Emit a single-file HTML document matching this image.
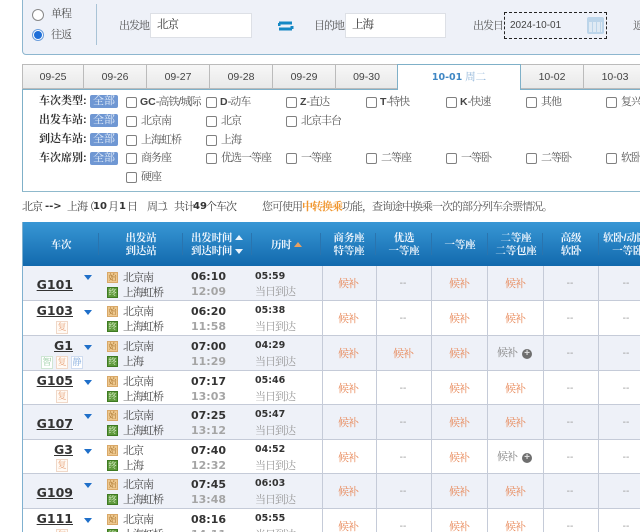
<!DOCTYPE html>
<html><head><meta charset="utf-8">
<style>
html,body{margin:0;padding:0;background:#fff;}
#p{position:relative;width:640px;height:532px;overflow:hidden;background:#fff;font-family:"Liberation Sans","Noto Serif CJK SC",serif;font-size:10px;color:#444;}
#p div{position:absolute;white-space:nowrap;}
.d{font-family:"DejaVu Sans",sans-serif;}
.lb{color:#555;font-size:11px;letter-spacing:-1px;line-height:14px;}
.inp{background:#fff;border:1px solid #dde0e6;box-sizing:border-box;height:25px;font-size:11.5px;letter-spacing:-1px;line-height:23px;padding-left:6px;color:#333;}
.tab{top:64px;height:25px;box-sizing:border-box;background:linear-gradient(#f7f7f7,#e9e9e9);border:1px solid #bbb;border-left:0;text-align:center;line-height:24px;font-size:10.5px;color:#444;}
.ft{font-weight:bold;color:#333;font-size:11px;line-height:14px;left:39px;}
.all{left:90px;width:28px;height:13px;background:#6f97d3;border-radius:2px;color:#e4edf9;font-size:11px;line-height:13px;text-align:center;}
.cb{width:9px;height:9px;border:1px solid #808080;border-radius:2px;background:#fff;}
.ct{font-size:11px;letter-spacing:-1px;line-height:14px;color:#555;}
.ct b{font-weight:bold;font-size:10.5px;letter-spacing:0;color:#444;}
.h{color:#eef5fc;font-size:10.5px;line-height:13px;text-align:center;font-weight:bold;letter-spacing:-.2px;}
.sep{top:233px;width:1px;height:22px;background:#2a74ae;}
.row{left:23px;width:617px;height:35px;box-sizing:border-box;border-bottom:1px solid #c5cbd8;}
.odd{background:#eef1f8;}.even{background:#fff;}
.g{font-family:"DejaVu Sans",sans-serif;font-weight:bold;font-size:12.5px;line-height:16px;color:#333;text-decoration:underline;text-align:right;width:50px;left:0;}
.tri{left:61px;width:0;height:0;border-left:4px solid transparent;border-right:4px solid transparent;border-top:5px solid #1f6fc9;margin-top:1px;}
.s1,.s2{left:84px;width:9px;height:9px;font-size:8px;line-height:9px;text-align:center;overflow:hidden;}
.s1{background:#eec88f;border:1px solid #d9a868;color:#a8732c;}
.s2{background:#5f9a3c;border:1px solid #3e7a22;color:#dff0d0;}
.st{left:100px;font-size:11px;letter-spacing:-1px;line-height:14px;color:#444;margin-top:1px;}
.t1,.t2{left:168px;font-family:"DejaVu Sans",sans-serif;font-weight:bold;font-size:11px;line-height:14px;color:#333;}
.t2{color:#a5a5a5;}
.du{left:232px;font-family:"DejaVu Sans",sans-serif;font-weight:bold;font-size:9.5px;line-height:14px;color:#333;}
.ar{left:232px;font-size:11px;letter-spacing:-1px;line-height:14px;color:#999;}
.c{text-align:center;font-size:11px;letter-spacing:-1px;line-height:14px;top:11px;color:#e8895a;}
.c1{left:299px;width:52px;}.c2{left:353px;width:54px;}.c3{left:409px;width:54px;}.c4{left:465px;width:54px;}.c5{left:520px;width:54px;}.c6{left:576px;width:54px;}
.n{color:#999;font-size:10px;letter-spacing:0;}
.gr{left:474px;width:auto;color:#888;top:10px;}
.vl{width:1px;background:#c5cbd8;top:266px;height:266px;}
.tag{width:10px;height:11px;border:1px solid #f0d8c8;background:#fffaf5;color:#e8a57c;font-size:9px;line-height:11px;text-align:center;}
.plus{left:499px;top:13px;width:10px;height:10px;background:#6e6e6e;border-radius:50%;color:#ddd;font-size:10px;line-height:10px;text-align:center;font-weight:bold;}
.sm{top:200px;font-size:11px;letter-spacing:-1px;line-height:14px;color:#444;}
.sb{top:200px;font-size:10px;line-height:14px;color:#333;font-weight:bold;font-family:"DejaVu Sans",sans-serif;}
</style></head><body><div id="p">

<!-- search panel -->
<div style="left:22px;top:-6px;width:630px;height:61px;box-sizing:border-box;background:#eef1f8;border:1px solid #8db6cf;border-radius:4px;"></div>
<div style="left:32px;top:9px;width:10px;height:10px;border:1px solid #888;border-radius:50%;background:#fff;"></div>
<div class="lb" style="left:51px;top:7px;">单程</div>
<div style="left:32px;top:29px;width:10px;height:10px;border:1px solid #6a9ddb;border-radius:50%;background:#fff;"></div>
<div style="left:34px;top:31px;width:8px;height:8px;border-radius:50%;background:#1f6fd8;"></div>
<div class="lb" style="left:51px;top:28px;">往返</div>
<div style="left:96px;top:4px;width:1px;height:41px;background:#a9c3d6;"></div>
<div class="lb" style="left:119px;top:19px;">出发地</div>
<div class="inp" style="left:150px;top:13px;width:102px;">北京</div>
<svg style="position:absolute;left:278px;top:19px;" width="16" height="14" viewBox="0 0 16 14"><path d="M1 4h13M1 10h13M1 4v3M14 10V7" fill="none" stroke="#1588c4" stroke-width="3"/></svg>
<div class="lb" style="left:314px;top:19px;">目的地</div>
<div class="inp" style="left:345px;top:13px;width:101px;">上海</div>
<div class="lb" style="left:473px;top:19px;">出发日</div>
<div style="left:504px;top:12px;width:103px;height:27px;box-sizing:border-box;border:1px dashed #222;background:#eef1f8;"></div>
<div style="left:510px;top:19px;font-size:10px;line-height:14px;color:#444;">2024-10-01</div>
<div style="left:587px;top:17px;width:17px;height:17px;background:#bcd5ea;border-radius:2px;"></div>
<div style="left:589px;top:22px;width:13px;height:10px;background:repeating-linear-gradient(90deg,#dfeaf4 0 3px,#bcd5ea 3px 4px);"></div>
<div class="lb" style="left:633px;top:19px;">返</div>

<!-- tabs -->
<div class="tab" style="left:22px;width:62px;border-left:1px solid #bbb;">09-25</div>
<div class="tab" style="left:84px;width:63px;">09-26</div>
<div class="tab" style="left:147px;width:63px;">09-27</div>
<div class="tab" style="left:210px;width:63px;">09-28</div>
<div class="tab" style="left:273px;width:63px;">09-29</div>
<div class="tab" style="left:336px;width:62px;">09-30</div>
<div style="left:397px;top:64px;width:124px;height:26px;box-sizing:border-box;background:#fff;border:1px solid #7fb0c8;border-bottom:0;text-align:center;line-height:24px;font-size:10.5px;color:#8fb4d8;"><span class="d" style="font-weight:bold;font-size:9.5px;color:#3f87c4;">10-01</span> 周二</div>
<div class="tab" style="left:521px;width:63px;">10-02</div>
<div class="tab" style="left:584px;width:63px;">10-03</div>

<!-- filter box -->
<div style="left:22px;top:89px;width:375px;height:1px;background:#7fb0c8;"></div>
<div style="left:521px;top:89px;width:119px;height:1px;background:#7fb0c8;"></div>
<div style="left:22px;top:89px;width:1px;height:103px;background:#7fb0c8;"></div>
<div style="left:22px;top:191px;width:618px;height:1px;background:#8fb9cc;"></div>

<div class="ft" style="top:94px;">车次类型:</div><div class="all" style="top:95px;">全部</div>
<div class="ft" style="top:113px;">出发车站:</div><div class="all" style="top:114px;">全部</div>
<div class="ft" style="top:132px;">到达车站:</div><div class="all" style="top:133px;">全部</div>
<div class="ft" style="top:151px;">车次席别:</div><div class="all" style="top:152px;">全部</div>

<div class="cb" style="left:126px;top:97px;"></div><div class="ct" style="left:140px;top:95px;"><b>GC</b>-高铁/城际</div>
<div class="cb" style="left:206px;top:97px;"></div><div class="ct" style="left:220px;top:95px;"><b>D</b>-动车</div>
<div class="cb" style="left:286px;top:97px;"></div><div class="ct" style="left:300px;top:95px;"><b>Z</b>-直达</div>
<div class="cb" style="left:366px;top:97px;"></div><div class="ct" style="left:380px;top:95px;"><b>T</b>-特快</div>
<div class="cb" style="left:446px;top:97px;"></div><div class="ct" style="left:460px;top:95px;"><b>K</b>-快速</div>
<div class="cb" style="left:526px;top:97px;"></div><div class="ct" style="left:541px;top:95px;">其他</div>
<div class="cb" style="left:606px;top:97px;"></div><div class="ct" style="left:621px;top:95px;">复兴</div>

<div class="cb" style="left:126px;top:116px;"></div><div class="ct" style="left:141px;top:114px;">北京南</div>
<div class="cb" style="left:206px;top:116px;"></div><div class="ct" style="left:221px;top:114px;">北京</div>
<div class="cb" style="left:286px;top:116px;"></div><div class="ct" style="left:301px;top:114px;">北京丰台</div>

<div class="cb" style="left:126px;top:135px;"></div><div class="ct" style="left:141px;top:133px;">上海虹桥</div>
<div class="cb" style="left:206px;top:135px;"></div><div class="ct" style="left:221px;top:133px;">上海</div>

<div class="cb" style="left:126px;top:153px;"></div><div class="ct" style="left:141px;top:151px;">商务座</div>
<div class="cb" style="left:206px;top:153px;"></div><div class="ct" style="left:221px;top:151px;">优选一等座</div>
<div class="cb" style="left:286px;top:153px;"></div><div class="ct" style="left:301px;top:151px;">一等座</div>
<div class="cb" style="left:366px;top:153px;"></div><div class="ct" style="left:381px;top:151px;">二等座</div>
<div class="cb" style="left:446px;top:153px;"></div><div class="ct" style="left:461px;top:151px;">一等卧</div>
<div class="cb" style="left:526px;top:153px;"></div><div class="ct" style="left:541px;top:151px;">二等卧</div>
<div class="cb" style="left:606px;top:153px;"></div><div class="ct" style="left:621px;top:151px;">软卧</div>
<div class="cb" style="left:126px;top:172px;"></div><div class="ct" style="left:141px;top:170px;">硬座</div>

<!-- summary -->
<div class="sm" style="left:22px;">北京</div>
<div class="sb" style="left:45px;">--&gt;</div>
<div class="sm" style="left:67px;">上海</div>
<div class="sm" style="left:84px;">（</div>
<div class="sb" style="left:93px;">10</div>
<div class="sm" style="left:108px;">月</div>
<div class="sb" style="left:119px;">1</div>
<div class="sm" style="left:127px;">日</div>
<div class="sm" style="left:147px;">周二</div>
<div class="sm" style="left:162px;">）</div>
<div class="sm" style="left:174px;">共计</div>
<div class="sb" style="left:193px;">49</div>
<div class="sm" style="left:206px;">个车次</div>
<div class="sm" style="left:262px;color:#555;">您可使用<span style="color:#f0962e;font-weight:bold;">中转换乘</span>功能，查询途中换乘一次的部分列车余票情况。</div>

<!-- header -->
<div style="left:22px;top:222px;width:618px;height:44px;background:linear-gradient(#3897d5,#1269ad);"></div>
<div class="h" style="left:40px;top:239px;width:42px;">车次</div>
<div class="h" style="left:120px;top:232px;width:42px;">出发站<br>到达站</div>
<div class="h" style="left:191px;top:232px;text-align:left;">出发时间<br>到达时间</div>
<div style="left:235px;top:235px;width:0;height:0;border-left:4px solid transparent;border-right:4px solid transparent;border-bottom:5px solid #eaf3fb;"></div>
<div style="left:235px;top:249px;width:0;height:0;border-left:4px solid transparent;border-right:4px solid transparent;border-top:5px solid #eaf3fb;"></div>
<div class="h" style="left:271px;top:239px;">历时</div>
<div style="left:294px;top:242px;width:0;height:0;border-left:4px solid transparent;border-right:4px solid transparent;border-bottom:5px solid #e8a060;"></div>
<div class="h" style="left:323px;top:232px;width:52px;">商务座<br>特等座</div>
<div class="h" style="left:378px;top:232px;width:52px;">优选<br>一等座</div>
<div class="h" style="left:434px;top:239px;width:52px;">一等座</div>
<div class="h" style="left:490px;top:232px;width:52px;">二等座<br>二等包座</div>
<div class="h" style="left:545px;top:232px;width:52px;">高级<br>软卧</div>
<div class="h" style="left:603px;top:232px;">软卧/动卧<br>&nbsp;&nbsp;一等卧</div>
<div class="sep" style="left:98px;"></div><div class="sep" style="left:182px;"></div><div class="sep" style="left:251px;"></div><div class="sep" style="left:320px;"></div><div class="sep" style="left:375px;"></div><div class="sep" style="left:431px;"></div><div class="sep" style="left:487px;"></div><div class="sep" style="left:542px;"></div><div class="sep" style="left:598px;"></div>

<!-- rows -->
<div class="row odd" style="top:266px;"><div class="g" style="top:11px;">G101</div><div class="tri" style="top:8px;"></div><div class="s1" style="top:6px;">始</div><div class="st" style="top:4px;">北京南</div><div class="s2" style="top:21px;">终</div><div class="st" style="top:19px;">上海虹桥</div><div class="t1" style="top:4px;">06:10</div><div class="t2" style="top:19px;">12:09</div><div class="du" style="top:4px;">05:59</div><div class="ar" style="top:19px;">当日到达</div><div class="c c1">候补</div><div class="c c2 n">--</div><div class="c c3">候补</div><div class="c c4">候补</div><div class="c c5 n">--</div><div class="c c6 n">--</div></div>

<div class="row even" style="top:301px;"><div class="g" style="top:2px;">G103</div><div class="tri" style="top:8px;"></div><div class="tag" style="left:33px;top:20px;">复</div><div class="s1" style="top:5px;">始</div><div class="st" style="top:3px;">北京南</div><div class="s2" style="top:20px;">终</div><div class="st" style="top:18px;">上海虹桥</div><div class="t1" style="top:4px;">06:20</div><div class="t2" style="top:19px;">11:58</div><div class="du" style="top:3px;">05:38</div><div class="ar" style="top:19px;">当日到达</div><div class="c c1">候补</div><div class="c c2 n">--</div><div class="c c3">候补</div><div class="c c4">候补</div><div class="c c5 n">--</div><div class="c c6 n">--</div></div>

<div class="row odd" style="top:336px;"><div class="g" style="top:2px;">G1</div><div class="tri" style="top:8px;"></div><div class="tag" style="left:18px;top:20px;color:#8fc89a;border-color:#cfe6d4;background:#fff;">智</div><div class="tag" style="left:33px;top:20px;">复</div><div class="tag" style="left:48px;top:20px;color:#7fa8dc;border-color:#cfdcf0;background:#fff;">静</div><div class="s1" style="top:5px;">始</div><div class="st" style="top:3px;">北京南</div><div class="s2" style="top:20px;">终</div><div class="st" style="top:18px;">上海</div><div class="t1" style="top:4px;">07:00</div><div class="t2" style="top:19px;">11:29</div><div class="du" style="top:3px;">04:29</div><div class="ar" style="top:19px;">当日到达</div><div class="c c1">候补</div><div class="c c2">候补</div><div class="c c3">候补</div><div class="c gr">候补</div><div class="plus">+</div><div class="c c5 n">--</div><div class="c c6 n">--</div></div>

<div class="row even" style="top:371px;height:34px;"><div class="g" style="top:2px;">G105</div><div class="tri" style="top:8px;"></div><div class="tag" style="left:33px;top:19px;">复</div><div class="s1" style="top:5px;">始</div><div class="st" style="top:3px;">北京南</div><div class="s2" style="top:20px;">终</div><div class="st" style="top:18px;">上海虹桥</div><div class="t1" style="top:4px;">07:17</div><div class="t2" style="top:19px;">13:03</div><div class="du" style="top:3px;">05:46</div><div class="ar" style="top:19px;">当日到达</div><div class="c c1">候补</div><div class="c c2 n">--</div><div class="c c3">候补</div><div class="c c4">候补</div><div class="c c5 n">--</div><div class="c c6 n">--</div></div>

<div class="row odd" style="top:405px;"><div class="g" style="top:11px;">G107</div><div class="tri" style="top:8px;"></div><div class="s1" style="top:5px;">始</div><div class="st" style="top:3px;">北京南</div><div class="s2" style="top:20px;">终</div><div class="st" style="top:18px;">上海虹桥</div><div class="t1" style="top:4px;">07:25</div><div class="t2" style="top:19px;">13:12</div><div class="du" style="top:3px;">05:47</div><div class="ar" style="top:19px;">当日到达</div><div class="c c1">候补</div><div class="c c2 n">--</div><div class="c c3">候补</div><div class="c c4">候补</div><div class="c c5 n">--</div><div class="c c6 n">--</div></div>

<div class="row even" style="top:440px;height:34px;"><div class="g" style="top:2px;">G3</div><div class="tri" style="top:8px;"></div><div class="tag" style="left:33px;top:19px;">复</div><div class="s1" style="top:5px;">始</div><div class="st" style="top:3px;">北京</div><div class="s2" style="top:20px;">终</div><div class="st" style="top:18px;">上海</div><div class="t1" style="top:4px;">07:40</div><div class="t2" style="top:19px;">12:32</div><div class="du" style="top:3px;">04:52</div><div class="ar" style="top:19px;">当日到达</div><div class="c c1">候补</div><div class="c c2 n">--</div><div class="c c3">候补</div><div class="c gr">候补</div><div class="plus">+</div><div class="c c5 n">--</div><div class="c c6 n">--</div></div>

<div class="row odd" style="top:474px;"><div class="g" style="top:11px;">G109</div><div class="tri" style="top:8px;"></div><div class="s1" style="top:5px;">始</div><div class="st" style="top:3px;">北京南</div><div class="s2" style="top:20px;">终</div><div class="st" style="top:18px;">上海虹桥</div><div class="t1" style="top:4px;">07:45</div><div class="t2" style="top:19px;">13:48</div><div class="du" style="top:3px;">06:03</div><div class="ar" style="top:19px;">当日到达</div><div class="c c1">候补</div><div class="c c2 n">--</div><div class="c c3">候补</div><div class="c c4">候补</div><div class="c c5 n">--</div><div class="c c6 n">--</div></div>

<div class="row even" style="top:509px;height:40px;border:0;"><div class="g" style="top:2px;">G111</div><div class="tri" style="top:8px;"></div><div class="tag" style="left:33px;top:20px;">复</div><div class="s1" style="top:5px;">始</div><div class="st" style="top:3px;">北京南</div><div class="s2" style="top:20px;">终</div><div class="st" style="top:18px;">上海虹桥</div><div class="t1" style="top:4px;">08:16</div><div class="t2" style="top:19px;">14:11</div><div class="du" style="top:3px;">05:55</div><div class="ar" style="top:19px;">当日到达</div><div class="c c1">候补</div><div class="c c2 n">--</div><div class="c c3">候补</div><div class="c c4">候补</div><div class="c c5 n">--</div><div class="c c6 n">--</div></div>

<div class="vl" style="left:322px;"></div><div class="vl" style="left:376px;"></div><div class="vl" style="left:431px;"></div><div class="vl" style="left:487px;"></div><div class="vl" style="left:543px;"></div><div class="vl" style="left:598px;"></div>
<div style="left:22px;top:222px;width:1px;height:310px;background:#7fb0cf;"></div>
</div></body></html>
